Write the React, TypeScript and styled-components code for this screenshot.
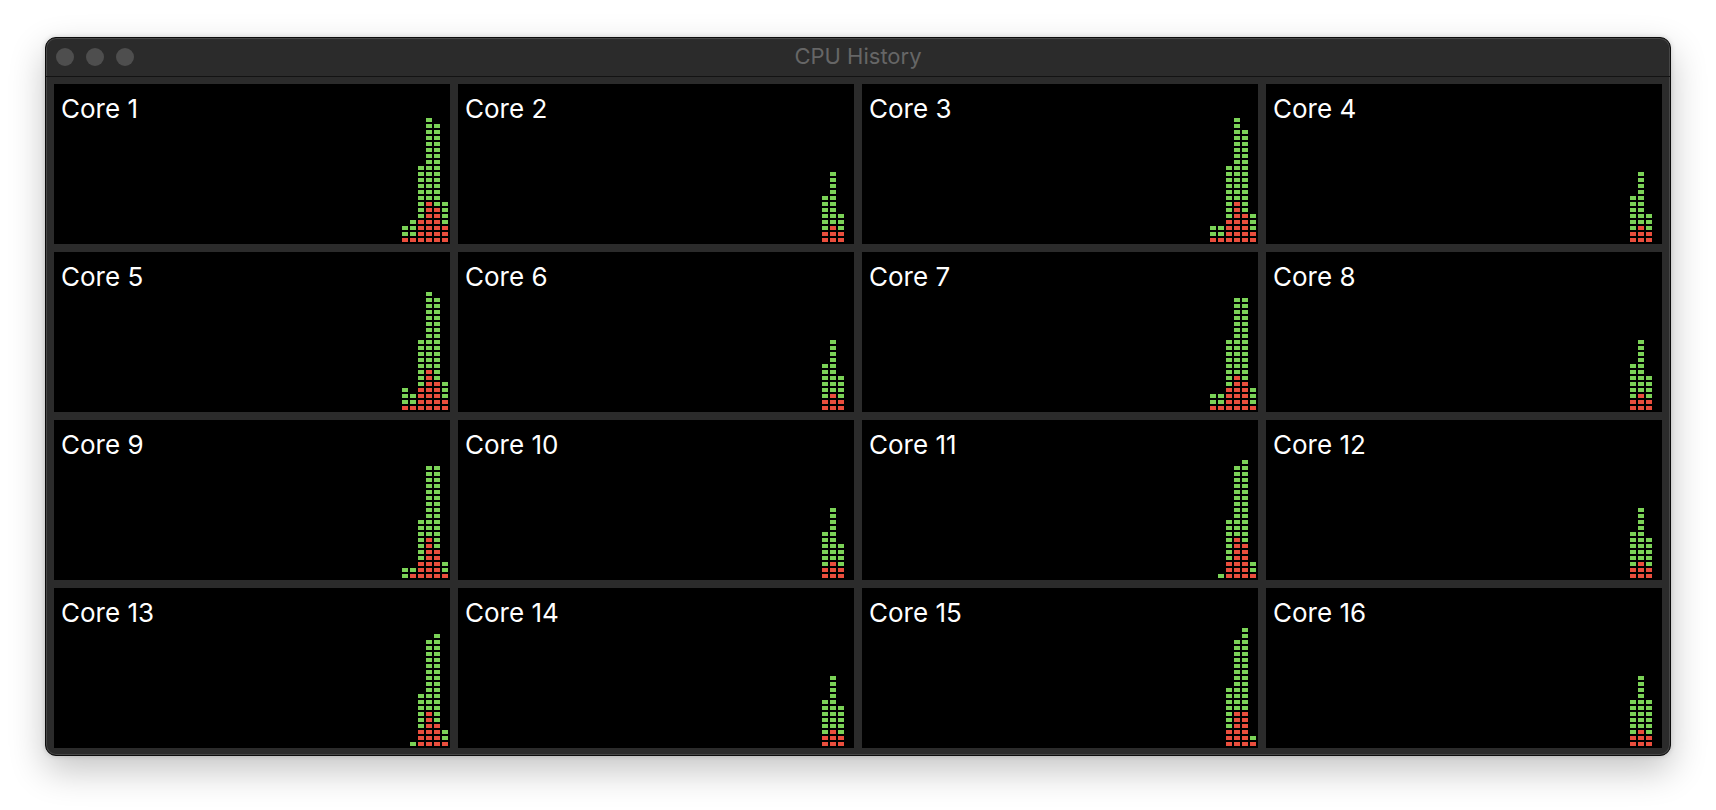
import React from "react";
import styled, { createGlobalStyle } from "styled-components";

const GlobalStyle = createGlobalStyle`
  html, body {
    margin: 0;
    padding: 0;
    background: #ffffff;
  }
  body {
    font-family: Inter, "Liberation Sans", Arial, sans-serif;
  }
`;

const GREEN = "#7bd257";
const RED = "#ea4e3d";

type Bar = [number, number]; // [total cells, red cells]

const cores: Bar[][] = [
  [[3, 1], [4, 1], [13, 4], [21, 7], [20, 6], [7, 3]],
  [[8, 2], [12, 3], [5, 2], [0, 0]],
  [[3, 1], [3, 1], [13, 4], [21, 7], [19, 5], [5, 2]],
  [[8, 2], [12, 3], [5, 2], [0, 0]],
  [[4, 1], [3, 1], [12, 4], [20, 7], [19, 5], [5, 2]],
  [[8, 2], [12, 3], [6, 2], [0, 0]],
  [[3, 1], [3, 1], [12, 4], [19, 6], [19, 5], [4, 1]],
  [[8, 2], [12, 3], [6, 2], [0, 0]],
  [[2, 0], [2, 1], [10, 3], [19, 7], [19, 5], [3, 1]],
  [[8, 2], [12, 3], [6, 2], [0, 0]],
  [[1, 0], [10, 3], [19, 7], [20, 6], [3, 1]],
  [[8, 2], [12, 3], [7, 2], [0, 0]],
  [[1, 0], [9, 3], [18, 6], [19, 4], [3, 1]],
  [[8, 2], [12, 3], [7, 2], [0, 0]],
  [[10, 3], [18, 6], [20, 6], [2, 1]],
  [[8, 2], [12, 3], [8, 2], [0, 0]],
];

const Page = styled.div`
  width: 1716px;
  height: 810px;
  box-sizing: border-box;
  padding: 37px 0 0 45px;
  overflow: hidden;
`;

const Window = styled.div`
  width: 1626px;
  box-sizing: border-box;
  border: 1px solid #0c0c0c;
  border-radius: 11px;
  background: #2b2b2b;
  box-shadow: inset 0 0 0 1px #474747, 0 14px 36px rgba(0, 0, 0, 0.24),
    0 0 5px rgba(0, 0, 0, 0.16);
  overflow: hidden;
  display: flex;
  flex-direction: column;
`;

const TitleBar = styled.div`
  height: 38px;
  display: grid;
  grid-template-columns: 1fr auto 1fr;
  align-items: center;
  padding: 0 10px;
  border-bottom: 1px solid #131313;
`;

const Lights = styled.div`
  display: flex;
  gap: 12px;
`;

const Light = styled.span`
  width: 18px;
  height: 18px;
  border-radius: 50%;
  background: #4e4e4e;
`;

const Title = styled.div`
  font-size: 22px;
  color: #666666;
  padding-bottom: 3px;
  white-space: nowrap;
`;

const Grid = styled.div`
  display: grid;
  grid-template-columns: repeat(4, 396px);
  grid-auto-rows: 160px;
  gap: 8px;
  padding: 7px 8px;
`;

const Panel = styled.div`
  background: #000000;
  display: grid;
  overflow: hidden;
`;

const Label = styled.div`
  grid-area: 1 / 1;
  align-self: start;
  justify-self: start;
  padding: 12px 0 0 7px;
  font-size: 26px;
  font-weight: 400;
  line-height: 26px;
  color: #ffffff;
`;

const Chart = styled.div`
  grid-area: 1 / 1;
  align-self: end;
  justify-self: end;
  display: flex;
  align-items: flex-end;
  gap: 2px;
  padding: 0 2px 2px 0;
`;

const Column = styled.div`
  display: flex;
  flex-direction: column-reverse;
  gap: 2px;
  width: 6px;
`;

const Cell = styled.span<{ $red: boolean }>`
  width: 6px;
  height: 4px;
  background: ${(p) => (p.$red ? RED : GREEN)};
`;

export default function App() {
  return (
    <>
      <GlobalStyle />
      <Page>
        <Window>
          <TitleBar>
            <Lights>
              <Light />
              <Light />
              <Light />
            </Lights>
            <Title>CPU History</Title>
            <span />
          </TitleBar>
          <Grid>
            {cores.map((bars, i) => (
              <Panel key={i}>
                <Label>Core {i + 1}</Label>
                <Chart>
                  {bars.map(([total, red], j) => (
                    <Column key={j}>
                      {Array.from({ length: total }, (_, k) => (
                        <Cell key={k} $red={k < red} />
                      ))}
                    </Column>
                  ))}
                </Chart>
              </Panel>
            ))}
          </Grid>
        </Window>
      </Page>
    </>
  );
}
